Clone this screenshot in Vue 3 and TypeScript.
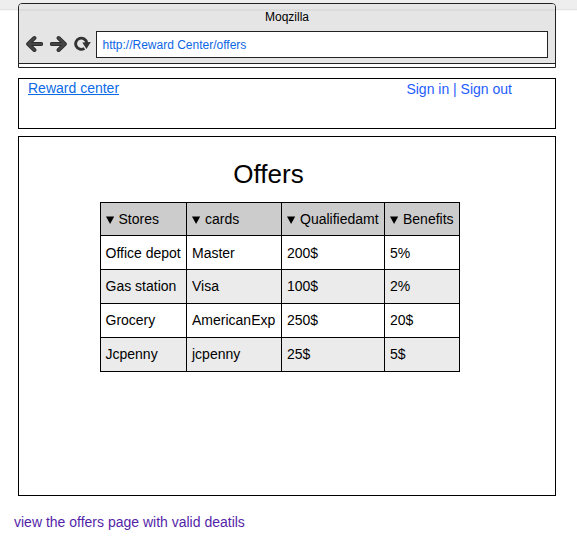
<script setup lang="ts">
interface Offer {
  store: string
  card: string
  amount: string
  benefit: string
}

const columns: string[] = ['Stores', 'cards', 'Qualifiedamt', 'Benefits']

const offers: Offer[] = [
  { store: 'Office depot', card: 'Master', amount: '200$', benefit: '5%' },
  { store: 'Gas station', card: 'Visa', amount: '100$', benefit: '2%' },
  { store: 'Grocery', card: 'AmericanExp', amount: '250$', benefit: '20$' },
  { store: 'Jcpenny', card: 'jcpenny', amount: '25$', benefit: '5$' },
]
</script>

<template>
  <div class="page">
    <header class="browser">
      <div class="chrome">
        <div class="title">Moqzilla</div>
        <div class="toolbar">
          <svg class="nav" width="17" height="18" viewBox="0 0 17 18">
            <path class="edge" d="M8.4 3 2.2 9l6.2 6M2.8 9h12.4" />
            <path class="core" d="M8.4 3 2.2 9l6.2 6M2.8 9h12.4" />
          </svg>
          <svg class="nav" width="17" height="18" viewBox="0 0 17 18">
            <path class="edge" d="M8.6 3 14.8 9l-6.2 6M14.2 9H1.8" />
            <path class="core" d="M8.6 3 14.8 9l-6.2 6M14.2 9H1.8" />
          </svg>
          <svg class="nav" width="17" height="18" viewBox="0 0 17 18">
            <path class="ring" d="M10.4 13.4A5.6 5.6 0 1 1 12.8 8" />
            <path class="tip" d="M8.3 7.6 16.8 7l-4.3 7z" />
          </svg>
          <div class="address">http://Reward Center/offers</div>
        </div>
      </div>
    </header>

    <nav class="account">
      <a class="brand">Reward center</a>
      <span class="session">Sign in | Sign out</span>
    </nav>

    <main class="content">
      <h1>Offers</h1>
      <div class="grid">
        <div v-for="name in columns" :key="name" class="cell head">
          <svg class="sort" width="8" height="8" viewBox="0 0 8 8"><path d="M0 .6h8.2L4.1 8z" /></svg>
          <span>{{ name }}</span>
        </div>
        <template v-for="(offer, i) in offers" :key="offer.store">
          <div
            v-for="(value, key) in offer"
            :key="key"
            class="cell"
            :class="{ shaded: i % 2 === 1, raised: i > 0 }"
          >{{ value }}</div>
        </template>
      </div>
    </main>

    <p class="caption">view the offers page with valid deatils</p>
  </div>
</template>

<style>
body {
  margin: 0;
  background: #fff;
}
</style>

<style scoped>
.page {
  box-sizing: border-box;
  width: 577px;
  height: 543px;
  padding: 3px 21px 0 18px;
  overflow: hidden;
  background: linear-gradient(#eee 0 9px, #e2e2e2 9px 10px, #f8f8f8 10px 11px, #fff 11px);
  font: 14px/16px "Liberation Sans", Arial, sans-serif;
  color: #000;
}
.browser {
  box-sizing: border-box;
  height: 65px;
  border: 1px solid #222;
  border-radius: 4px 4px 0 0;
  background: #fff;
  overflow: hidden;
}
.chrome {
  box-sizing: border-box;
  height: 60px;
  border-bottom: 1px solid #222;
  background: linear-gradient(#e6e6e6 0 5px, #dcdcdc 5px 7px, #e5e5e5 7px);
}
.title {
  height: 27px;
  font-size: 12px;
  line-height: 26px;
  text-align: center;
}
.toolbar {
  display: flex;
  align-items: center;
  gap: 7px;
  padding: 0 7px;
  height: 27px;
}
.nav {
  flex: none;
  margin-bottom: 1px;
  fill: none;
  stroke-linecap: round;
  stroke-linejoin: round;
}
.edge {
  stroke: #2f2f2f;
  stroke-width: 4;
}
.core {
  stroke: #464646;
  stroke-width: 2;
}
.ring {
  stroke: #333;
  stroke-width: 2.9;
  stroke-linecap: butt;
}
.tip {
  fill: #333;
}
.address {
  box-sizing: border-box;
  flex: 1;
  height: 27px;
  margin-left: -2px;
  padding-left: 5.5px;
  border: 1px solid #222;
  background: #fff;
  font-size: 12px;
  line-height: 26px;
  color: #0b66e4;
}
.account {
  box-sizing: border-box;
  display: flex;
  justify-content: space-between;
  height: 51px;
  margin-top: 10px;
  padding: 1px 43px 0 9px;
  border: 1px solid #000;
  background: #fff;
}
.brand {
  color: #0b6be6;
  text-decoration: underline;
}
.session {
  padding-top: 1px;
  color: #1f5cff;
}
.content {
  box-sizing: border-box;
  height: 360px;
  margin-top: 7px;
  padding: 22px 0 0 81px;
  border: 1px solid #000;
  background: #fff;
}
h1 {
  width: 337px;
  height: 30px;
  margin: 0 0 13px;
  font-size: 26px;
  font-weight: 400;
  line-height: 30px;
  text-align: center;
}
.grid {
  display: grid;
  grid-template-columns: 85px 94px 102px 74px;
  grid-template-rows: 32px repeat(4, 33px);
  gap: 1px;
  width: max-content;
  padding: 1px;
  background: #000;
}
.cell {
  display: flex;
  align-items: center;
  padding-left: 5px;
  background: #fff;
  white-space: nowrap;
}
.cell:nth-child(4n + 1) {
  padding-left: 4.5px;
}
.head {
  gap: 5px;
  background: #ccc;
}
.shaded {
  background: #ebebeb;
}
.raised {
  padding-bottom: 1px;
}
.sort {
  flex: none;
  margin-top: 2px;
  overflow: visible;
}
.caption {
  margin: 18px 0 0 -4px;
  color: #551fa8;
}
</style>
